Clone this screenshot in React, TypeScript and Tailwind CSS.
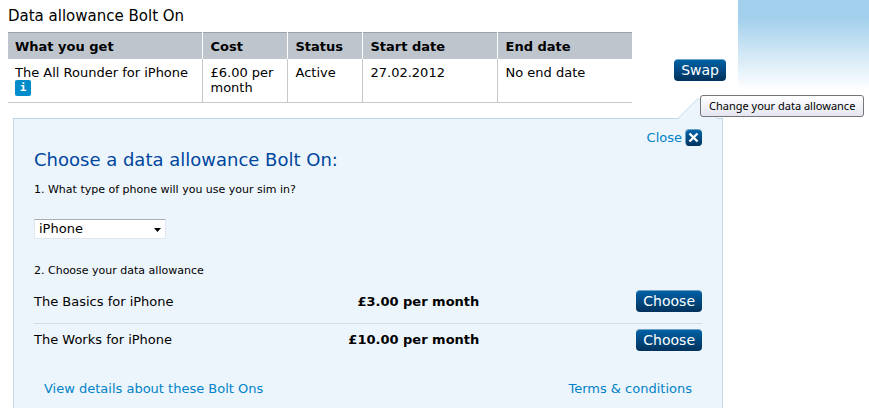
import { useState } from "react";

const currentBoltOns = [
  {
    name: "The All Rounder for iPhone",
    cost: "£6.00 per month",
    status: "Active",
    start: "27.02.2012",
    end: "No end date",
  },
];

const options = [
  { name: "The Basics for iPhone", price: "£3.00 per month" },
  { name: "The Works for iPhone", price: "£10.00 per month" },
];

const headers = ["What you get", "Cost", "Status", "Start date", "End date"];

function BlueButton({ label, describedBy }: { label: string; describedBy?: string }) {
  return (
    <button
      type="button"
      aria-describedby={describedBy}
      className="flex h-[22px] justify-center rounded-[4px] border-t border-[#6fa3c4] bg-linear-to-b from-[#0061a6] to-[#00325c] px-[7px] text-[14px] leading-[21px] text-white"
    >
      {label}
    </button>
  );
}

function CurrentTable() {
  return (
    <table className="w-full table-fixed border-collapse text-left">
      <colgroup>
        <col className="w-[194px]" />
        <col className="w-[85px]" />
        <col className="w-[75px]" />
        <col className="w-[135px]" />
        <col />
      </colgroup>
      <thead>
        <tr className="border-t border-[#9aa3ae] bg-[#bec5cd]">
          {headers.map((header) => (
            <th
              key={header}
              className="h-[26px] border-r border-white pt-px pl-2 font-bold first:pl-[7px] last:border-r-0"
            >
              {header}
            </th>
          ))}
        </tr>
      </thead>
      <tbody>
        {currentBoltOns.map((item) => (
          <tr key={item.name} className="h-[44px] border-b border-[#c8c8c8] align-top leading-[15px]">
            <td className="border-r border-[#c8c8c8] pt-[6px] pl-[7px] whitespace-nowrap">
              {item.name}
              <button
                type="button"
                aria-label="More information"
                className="flex size-4 items-center justify-center rounded-[2px] bg-[#008bcb] font-['DejaVu_Sans_Mono',monospace] text-[11px] font-bold text-white"
              >
                i
              </button>
            </td>
            <td className="border-r border-[#c8c8c8] pt-[6px] pl-2">{item.cost}</td>
            <td className="border-r border-[#c8c8c8] pt-[6px] pl-2">{item.status}</td>
            <td className="border-r border-[#c8c8c8] pt-[6px] pl-2">{item.start}</td>
            <td className="pt-[6px] pl-2">{item.end}</td>
          </tr>
        ))}
      </tbody>
    </table>
  );
}

function CloseIcon() {
  return (
    <svg width="17" height="17" viewBox="0 0 17 17" aria-hidden="true">
      <defs>
        <linearGradient id="close-fill" x1="0" y1="0" x2="0" y2="1">
          <stop offset="0" stopColor="#0063a8" />
          <stop offset="1" stopColor="#00345f" />
        </linearGradient>
      </defs>
      <rect width="17" height="17" rx="4" fill="#6fa3c4" />
      <path
        d="M1 5 Q1 1 5 1 H13 Q17 1 17 5 V13 Q17 17 13 17 H4 Q1 17 1 13 Z"
        fill="url(#close-fill)"
      />
      <path d="M4.5 4.5 L12.5 12.5 M12.5 4.5 L4.5 12.5" stroke="#fff" strokeWidth="2.4" />
    </svg>
  );
}

function ChoosePanel() {
  const [phone, setPhone] = useState("iPhone");

  return (
    <section className="relative mr-[15px] ml-[5px] flex-1 border border-b-0 border-[#bfd7e8] bg-[#edf5fc] px-5 pt-[10px]">
      <svg
        className="absolute -top-[21px] right-1 h-[21px] w-10"
        viewBox="0 0 40 21"
        aria-hidden="true"
      >
        <path d="M0 21 L20 1 L40 21 Z" fill="#edf5fc" />
        <path d="M0 20.5 L20 0.5 L40 20.5" fill="none" stroke="#bfd7e8" />
      </svg>

      <div className="flex justify-end">
        <button type="button" className="flex items-center gap-[3px] leading-[17px] text-[#0083c8]">
          Close
          <CloseIcon />
        </button>
      </div>

      <h2 className="mt-1 text-[18px] leading-[20px] text-[#00479d]">
        Choose a data allowance Bolt On:
      </h2>
      <label htmlFor="phone" className="mt-3 block text-[11px] leading-[16px]">
        1. What type of phone will you use your sim in?
      </label>
      <div className="relative mt-[21px] w-[132px]">
        <select
          id="phone"
          value={phone}
          onChange={(e) => setPhone(e.target.value)}
          className="block h-5 w-full appearance-none border border-[#e1e7ee] border-t-[#abadb3] bg-white pl-1 text-[13px] leading-[18px]"
        >
          <option>iPhone</option>
          <option>BlackBerry</option>
          <option>Other phone</option>
        </select>
        <svg
          className="pointer-events-none absolute top-[9px] right-[5px]"
          width="7"
          height="4"
          viewBox="0 0 7 4"
          aria-hidden="true"
        >
          <path d="M0 0 H7 L3.5 4 Z" fill="#000" />
        </svg>
      </div>

      <p className="mt-6 text-[11px] leading-[16px]">2. Choose your data allowance</p>
      <table className="mt-[6px] w-full table-fixed border-collapse">
        <tbody>
          {options.map((option) => (
            <tr key={option.name} className="h-[38px] border-b border-[#d8dbde] last:border-b-0">
              <td className="w-1/3 pb-[5px]">{option.name}</td>
              <td className="w-1/3 pb-[5px] text-right font-bold">{option.price}</td>
              <td className="w-1/3 pb-[5px]">
                <div className="flex justify-end">
                  <BlueButton label="Choose" />
                </div>
              </td>
            </tr>
          ))}
        </tbody>
      </table>

      <div className="mt-5 flex justify-between px-[10px] leading-[16px] text-[#0083c8]">
        <a href="#details">View details about these Bolt Ons</a>
        <a href="#terms">Terms &amp; conditions</a>
      </div>
    </section>
  );
}

export default function App() {
  return (
    <div className="flex min-h-screen bg-white font-['DejaVu_Sans',Verdana,sans-serif] text-[13px] text-black">
      <main className="flex flex-1 flex-col pl-2">
        <h1 className="pt-[6px] pb-[6px] text-[15px] leading-[20px]">Data allowance Bolt On</h1>
        <div className="mb-[15px] flex">
          <div className="flex-1">
            <CurrentTable />
          </div>
          <div className="relative flex w-[106px] items-start justify-end pt-[27px] pr-3">
            <BlueButton label="Swap" describedBy="swap-tip" />
            <div
              id="swap-tip"
              role="tooltip"
              className="absolute top-[63px] left-[68px] z-10 rounded-[3px] border border-[#767676] bg-linear-to-b from-white to-[#e4e5f0] px-2 font-['Noto_Sans','Open_Sans',sans-serif] text-[11px] leading-[20px] whitespace-nowrap"
            >
              Change your data allowance
            </div>
          </div>
        </div>
        <ChoosePanel />
      </main>
      <aside className="h-[90px] w-[131px] bg-linear-to-b from-[#a3d0ec] from-20% to-white" />
    </div>
  );
}
